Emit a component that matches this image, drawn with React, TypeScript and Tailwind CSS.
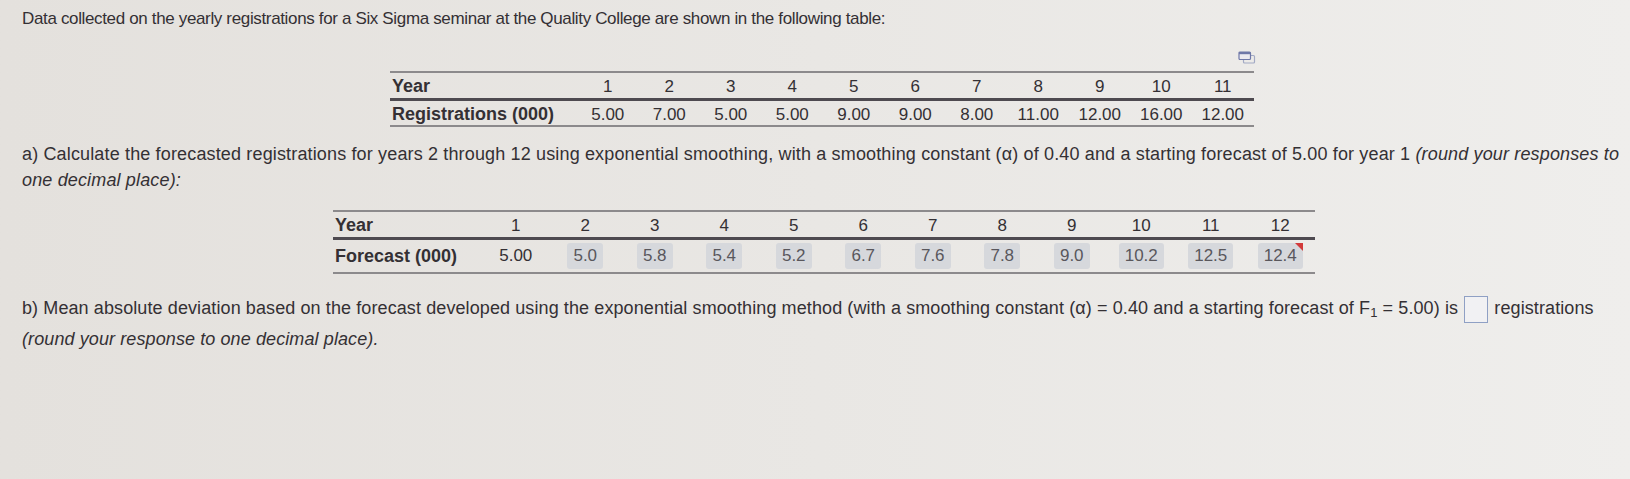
import React from "react";

const regYears = ["1", "2", "3", "4", "5", "6", "7", "8", "9", "10", "11"];
const regs = ["5.00", "7.00", "5.00", "5.00", "9.00", "9.00", "8.00", "11.00", "12.00", "16.00", "12.00"];
const fcYears = ["1", "2", "3", "4", "5", "6", "7", "8", "9", "10", "11", "12"];
const forecasts = ["5.0", "5.8", "5.4", "5.2", "6.7", "7.6", "7.8", "9.0", "10.2", "12.5", "12.4"];

function TableIcon() {
  return (
    <svg width="18" height="13" viewBox="0 0 18 13" fill="none">
      <rect x="5.5" y="4.5" width="11" height="7.5" rx="1" stroke="#a2a9c4" strokeWidth="1.2" />
      <rect x="1" y="1" width="11.5" height="7.5" rx="1" fill="#eceaf0" stroke="#6f78a8" strokeWidth="1.2" />
      <rect x="1" y="1" width="11.5" height="2.2" fill="#6f78a8" />
    </svg>
  );
}

export default function App() {
  return (
    <div
      className="w-[1630px] h-[479px] overflow-hidden bg-gradient-to-r from-[#e4e1dd] via-[#e9e7e4] to-[#efeeec] text-[#343034] pl-[22px] pt-[8px]"
      style={{ fontFamily: '"Liberation Sans", Arial, sans-serif' }}
    >
      <p className="text-[17px] leading-[22px] tracking-[-0.35px]">
        Data collected on the yearly registrations for a Six Sigma seminar at the Quality College are shown in the following table:
      </p>

      {/* registrations table */}
      <div className="ml-[368px] w-[864px] mt-[21px]">
        <div className="flex justify-end h-[10px] mb-[10px] -mr-[2px]">
          <TableIcon />
        </div>
        <div className="border-t-2 border-[#8c8a8c]">
          <div className="grid grid-cols-[187px_repeat(11,61.5px)] h-[25px] items-center text-[17px]">
            <div className="font-bold pl-[2px] text-[18px]">Year</div>
            {regYears.map((y) => (
              <div key={y} className="text-center">{y}</div>
            ))}
          </div>
          <div className="grid grid-cols-[187px_repeat(11,61.5px)] h-[27px] items-center text-[17px] border-t-[3px] border-[#4e4a50]">
            <div className="font-bold pl-[2px] text-[18px]">Registrations (000)</div>
            {regs.map((r, i) => (
              <div key={i} className="text-center">{r}</div>
            ))}
          </div>
        </div>
        <div className="border-t-2 border-[#8c8a8c]" />
      </div>

      <p className="text-[18px] leading-[26px] mt-[14px] w-[1608px] tracking-[0.15px]">
        a) Calculate the forecasted registrations for years 2 through 12 using exponential smoothing, with a smoothing constant (α) of 0.40 and a starting forecast of 5.00 for year 1{" "}
        <i>(round your responses to one decimal place):</i>
      </p>

      {/* forecast table */}
      <div className="ml-[311px] w-[982px] mt-[17px]">
        <div className="border-t-2 border-[#8c8a8c]">
          <div className="grid grid-cols-[148px_repeat(12,69.5px)] h-[25px] items-center text-[17px]">
            <div className="font-bold pl-[2px] text-[18px]">Year</div>
            {fcYears.map((y) => (
              <div key={y} className="text-center">{y}</div>
            ))}
          </div>
          <div className="grid grid-cols-[148px_repeat(12,69.5px)] h-[35px] items-center text-[17px] border-t-[3px] border-[#4e4a50]">
            <div className="font-bold pl-[2px] text-[18px]">Forecast (000)</div>
            <div className="text-center">5.00</div>
            {forecasts.map((f, i) => (
              <div key={i} className="flex justify-center">
                <span className="relative bg-[#d6d8dc] rounded-[3px] h-[26px] px-[6px] leading-[26px] text-[#59575c]">
                  {f}
                  {i === forecasts.length - 1 && (
                    <span className="absolute top-0 right-0 w-0 h-0 border-t-[8px] border-l-[8px] border-t-[#d23a3a] border-l-transparent" />
                  )}
                </span>
              </div>
            ))}
          </div>
        </div>
        <div className="border-t-2 border-[#8c8a8c]" />
      </div>

      <p className="text-[18px] leading-[31px] mt-[19px] w-[1600px] tracking-[0.1px]">
        b) Mean absolute deviation based on the forecast developed using the exponential smoothing method (with a smoothing constant (α) = 0.40 and a starting forecast of F
        <sub className="text-[13px]">1</sub> = 5.00) is{" "}
        <span className="inline-block align-middle w-[24px] h-[27px] border border-[#8fa0c4] bg-[#f1f1f3] mx-[1px]" />{" "}
        registrations <i>(round your response to one decimal place).</i>
      </p>
    </div>
  );
}
